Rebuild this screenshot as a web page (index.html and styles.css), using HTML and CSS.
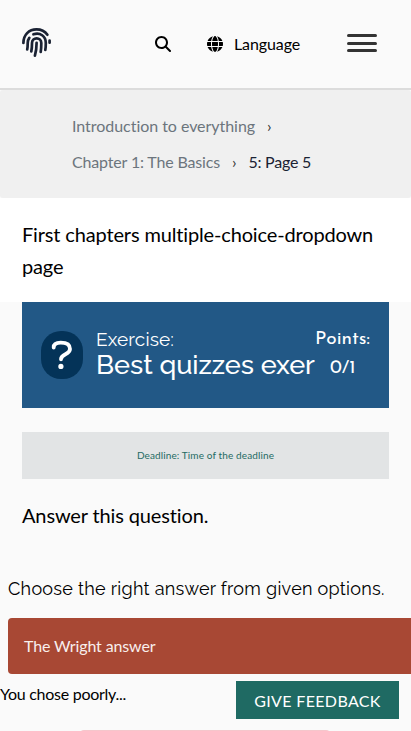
FILE: index.html
```html
<!DOCTYPE html>
<html lang="en">
<head>
<meta charset="utf-8">
<title>5: Page 5</title>
<link rel="stylesheet" href="styles.css">
</head>
<body>
<header class="header">
  <svg class="logo" viewBox="0 0 30 30" fill="none" stroke="#1a2233" stroke-width="2.7" stroke-linecap="round">
    <path d="M1.4 15C1.4 6.8 7 1.4 14.5 1.4c4.7 0 8.500 2 10.900 5.300M27.600 12.500v2.200M5.200 21.500c.5-2.200.5-4.500.5-6.600 0-2 .6-3.600 1.600-5M11.400 6.300c6.900-2.300 12.400 2 12.400 8.600 0 2.500-.1 4.800-.5 7M9.300 23.400c.6-2.900.7-5.800.7-8.400 0-6.300 9.300-6.300 9.300 0 0 3.200-.1 6.100-.6 9M14.600 14.800c0 4.600-.4 8.600-1.700 12.800"/>
  </svg>
  <svg class="search" viewBox="0 0 512 512"><path d="M416 208c0 45.900-14.900 88.300-40 122.700L502.600 457.400c12.500 12.500 12.500 32.800 0 45.300s-32.800 12.500-45.300 0L330.700 376c-34.400 25.200-76.800 40-122.700 40C93.100 416 0 322.900 0 208S93.100 0 208 0S416 93.100 416 208zM208 352a144 144 0 1 0 0-288 144 144 0 1 0 0 288z"/></svg>
  <div class="language">
    <svg class="globe" viewBox="0 0 512 512"><path d="M352 256c0 22.200-1.200 43.600-3.300 64H163.300c-2.200-20.400-3.300-41.800-3.300-64s1.200-43.600 3.300-64H348.700c2.200 20.400 3.300 41.800 3.300 64zm28.800-64H503.900c5.300 20.500 8.100 41.900 8.100 64s-2.800 43.500-8.100 64H380.800c2.100-20.600 3.200-42 3.200-64s-1.100-43.400-3.200-64zm112.600-32H376.700c-10-63.900-29.800-117.400-55.300-151.600c78.300 20.700 142 77.500 171.900 151.600zm-149.100 0H167.700c6.100-36.400 15.500-68.600 27-94.700c10.500-23.600 22.200-40.700 33.500-51.500C239.400 3.200 248.700 0 256 0s16.600 3.200 27.800 13.800c11.300 10.800 23 27.900 33.500 51.500c11.600 26 20.900 58.200 27 94.700zm-209 0H18.600C48.600 85.900 112.200 29.100 190.600 8.400C165.100 42.600 145.300 96.100 135.300 160zM8.100 192H131.200c-2.100 20.600-3.200 42-3.200 64s1.100 43.400 3.200 64H8.100C2.800 299.500 0 278.100 0 256s2.800-43.500 8.100-64zM194.700 446.600c-11.600-26-20.900-58.200-27-94.600H344.300c-6.100 36.400-15.500 68.600-27 94.600c-10.500 23.600-22.200 40.700-33.500 51.500C272.600 508.800 263.300 512 256 512s-16.600-3.200-27.800-13.800c-11.300-10.800-23-27.900-33.500-51.500zM135.300 352c10 63.900 29.800 117.400 55.300 151.600C112.200 482.900 48.600 426.100 18.600 352H135.300zm358.100 0c-30 74.100-93.600 130.900-171.900 151.600c25.500-34.200 45.200-87.700 55.300-151.600H493.400z"/></svg>
    <span>Language</span>
  </div>
  <div class="menu"><i></i><i></i><i></i></div>
</header>
<nav class="crumbs">
  <div class="crumb-row"><a class="intro">Introduction to everything</a><span class="sep">›</span></div>
  <div class="crumb-row"><a class="chapter">Chapter 1: The Basics</a><span class="sep">›</span><span class="current">5: Page 5</span></div>
</nav>
<h1 class="title">First chapters multiple-choice-dropdown page</h1>
<main>
  <section class="exercise">
    <svg class="question" viewBox="0 0 42 48">
      <rect width="42" height="48" rx="20" fill="#043358"/>
      <path d="M12.700 16.500c0-3.600 3-4.800 7-4.800 5.500 0 9.300 2.100 9.300 6.300 0 6-9 4.500-9 10.300" fill="none" stroke="#fff" stroke-width="3.800" stroke-linecap="round"/>
      <circle cx="19.900" cy="35.400" r="2.600" fill="#fff"/>
    </svg>
    <div class="names"><div class="kind">Exercise:</div><div class="name">Best quizzes exer</div></div>
    <div class="points"><div class="points-label">Points:</div><div class="score">0/1</div></div>
  </section>
  <div class="deadline">Deadline: Time of the deadline</div>
  <p class="instruction">Answer this question.</p>
  <p class="prompt">Choose the right answer from given options.</p>
  <div class="answer">The Wright answer</div>
  <div class="feedback"><span class="result">You chose poorly...</span><button class="give">GIVE FEEDBACK</button></div>
  <div class="next"></div>
</main>
</body>
</html>
```
FILE: styles.css
```css
* { box-sizing: border-box; }
html { height: 100%; overflow: hidden; }
body { margin: 0; height: 731px; overflow: hidden; background: #fafafa; color: #000; font: 16px/24px Lato, sans-serif; font-variant-ligatures: none; letter-spacing: -.1px; }
p, h1 { margin: 0; font-weight: 400; }
svg { display: block; flex: none; }
.header { display: flex; height: 90px; border-bottom: 2px solid #dcdcdc; align-items: flex-start; padding-left: 22px; }
.logo { width: 30px; height: 30px; margin-top: 28px; }
.search { width: 16px; height: 16px; margin: 36px 0 0 103px; }
.language { display: flex; align-items: center; margin: 32px 0 0 36px; width: 140px; }
.globe { width: 16px; height: 16px; margin-right: 11px; }
.menu { display: flex; flex-direction: column; gap: 4.500px; margin-top: 34px; width: 30px; }
.menu i { height: 3px; border-radius: 2px; background: #333; }
.crumbs { height: 108px; padding: 18px 0 0 72px; background: #f0f0f0; color: #6c757d; border-radius: 3px; }
.crumb-row { display: flex; height: 36px; line-height: 36px; }
.intro { letter-spacing: -.04px; }
.chapter { letter-spacing: -.16px; }
.sep { margin: 0 12px; color: #333; }
.current { color: #1a2233; letter-spacing: -.22px; }
.title { height: 104px; padding: 20px 22px; background: #fff; font-size: 20px; line-height: 32px; letter-spacing: -.15px; }
.exercise { display: flex; margin: 0 22px; height: 106px; background: #225886; color: #fff; padding-left: 19px; }
.question { width: 42px; height: 48px; margin-top: 29px; }
.names { width: 219px; margin: 24px 0 0 13px; font-family: Raleway, Lato, sans-serif; white-space: nowrap; }
.kind { font-size: 19px; line-height: 26px; font-weight: 450; letter-spacing: .15px; }
.name { font-size: 27px; line-height: 26px; font-weight: 500; letter-spacing: -.04px; }
.points { width: 56px; margin-top: 24px; font-family: "Josefin Sans", Lato, sans-serif; font-size: 19px; letter-spacing: 0; }
.points-label { padding-top: 1px; height: 26px; line-height: 26px; white-space: nowrap; }
.score { padding-left: 15px; line-height: 34px; }
.deadline { margin: 24px 22px 0; height: 47px; background: #e2e4e5; color: #1f6b63; font-size: 10px; line-height: 47px; text-align: center; letter-spacing: .12px; }
.instruction { margin: 20px 22px 0; font-size: 20px; line-height: 32px; letter-spacing: -.13px; }
.prompt { margin: 44px 0 0 8px; font: 18px/28px Raleway, Lato, sans-serif; white-space: nowrap; letter-spacing: .27px; }
.answer { height: 56px; margin: 15px 0 0 8px; padding-left: 16px; border-radius: 4px 0 0 4px; background: #a84834; color: #f8efed; line-height: 56px; letter-spacing: -.13px; }
.feedback { display: flex; justify-content: space-between; align-items: flex-start; height: 56px; padding: 7px 12px 0 0; line-height: 26px; }
.result { letter-spacing: -.27px; }
.give { width: 163px; height: 38px; border: 0; padding: 0; background: #1f6a63; color: #fff; font: 16px Lato, sans-serif; letter-spacing: .35px; }
.next { width: 250px; height: 10px; margin-left: 80px; border-radius: 4px; background: #f5c6cb; }
```
